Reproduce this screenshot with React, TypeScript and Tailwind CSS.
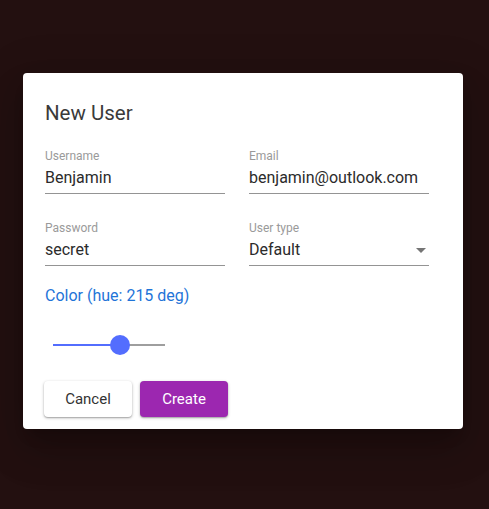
const font = { fontFamily: 'Roboto, "Liberation Sans", sans-serif' };

function Field({ label, value, select }: { label: string; value: string; select?: boolean }) {
  return (
    <div className="flex flex-col">
      <span className="text-[12px] leading-4 text-[#9a9a9a]">{label}</span>
      <div className="mt-[2px] flex items-center justify-between border-b border-[#949494] pb-[3px]">
        <span className="text-[16px] leading-6 text-[#2b2b2b]">{value}</span>
        {select && (
          <svg width="10" height="5" viewBox="0 0 10 5" className="mr-[3px]">
            <path d="M0 0h10L5 5z" fill="#757575" />
          </svg>
        )}
      </div>
    </div>
  );
}

function HueSlider({ hue }: { hue: number }) {
  const pct = (hue / 360) * 100;
  return (
    <div className="relative ml-2 h-5 w-[112px]">
      <div className="absolute left-0 right-0 top-[9px] h-[2px] bg-[#9e9e9e]" />
      <div className="absolute left-0 top-[9px] h-[2px] bg-[#536dfe]" style={{ width: `${pct}%` }} />
      <div
        className="absolute top-0 h-5 w-5 -translate-x-1/2 rounded-full bg-[#536dfe]"
        style={{ left: `${pct}%` }}
      />
    </div>
  );
}

export default function App() {
  return (
    <div className="min-h-screen bg-[#231010] pl-[23px] pt-[73px]" style={font}>
      <div className="flex w-[440px] flex-col rounded bg-white px-[22px] pb-3 pt-6 shadow-[0_11px_15px_-7px_rgba(0,0,0,0.2),0_24px_38px_3px_rgba(0,0,0,0.14),0_9px_46px_8px_rgba(0,0,0,0.12)]">
        <h2 className="text-[20.5px] leading-8 text-[#3a3a3a]">New User</h2>

        <div className="mt-[19px] grid grid-cols-[180px_180px] gap-x-6 gap-y-[26px]">
          <Field label="Username" value="Benjamin" />
          <Field label="Email" value="benjamin@outlook.com" />
          <Field label="Password" value="secret" />
          <Field label="User type" value="Default" select />
        </div>

        <p className="mt-[18px] text-[16px] leading-6 text-[#1f74d8]">Color (hue: 215 deg)</p>

        <div className="mt-[27px]">
          <HueSlider hue={215} />
        </div>

        <div className="-ml-px mt-[26px] flex gap-2">
          <button className="h-9 w-[88px] rounded bg-white text-[15px] text-[#333] shadow-[0_1px_3px_rgba(0,0,0,0.3),0_1px_1px_rgba(0,0,0,0.14)]">
            Cancel
          </button>
          <button className="h-9 w-[88px] rounded bg-[#9c27b0] text-[15px] text-white shadow-[0_1px_3px_rgba(0,0,0,0.3),0_1px_1px_rgba(0,0,0,0.14)]">
            Create
          </button>
        </div>
      </div>
    </div>
  );
}
